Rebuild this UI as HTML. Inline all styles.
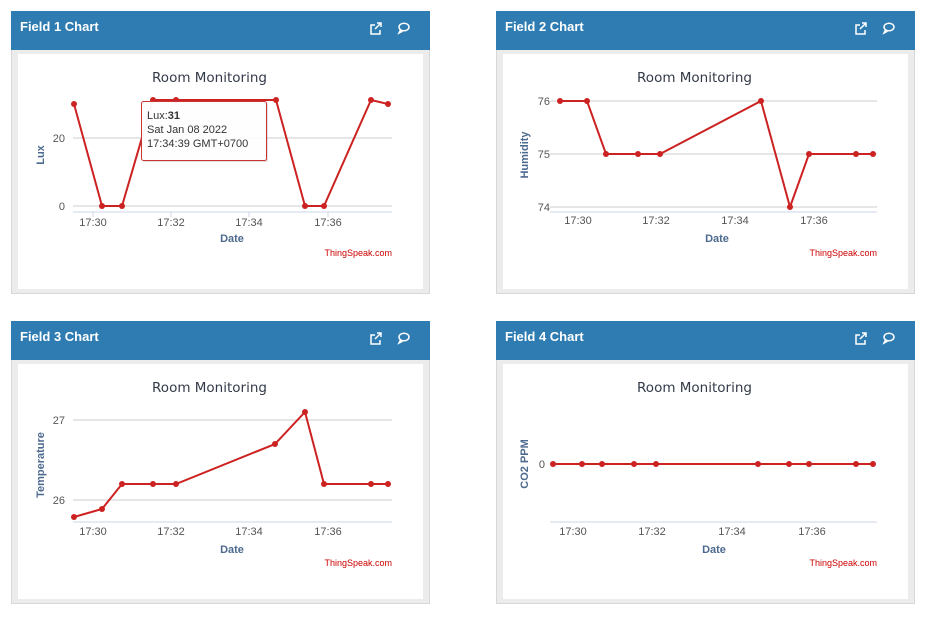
<!DOCTYPE html>
<html><head><style>
body{margin:0;background:#fff;width:927px;height:617px;overflow:hidden;font-family:"Liberation Sans",sans-serif}
svg text{font-family:"Liberation Sans",sans-serif}
svg text.t{font-family:"DejaVu Sans",sans-serif}
</style></head><body>
<svg width="927" height="617" xmlns="http://www.w3.org/2000/svg">
<defs>
<g id="panel">
<rect x="0.5" y="0.5" width="418" height="282" fill="#ececec" stroke="#d8d8d8"/>
<rect x="0" y="0" width="419" height="39" fill="#2e7cb2"/>
<rect x="7" y="43" width="405" height="235" fill="#fff"/>
<g fill="none" stroke="#fff" stroke-width="1.5">
<path d="M364 14h-4v9h9v-4"/><path d="M366 12h4v4M370 12l-6 6"/>
<ellipse cx="393" cy="16" rx="5" ry="3.8"/><path d="M389.5 19l-1.5 3l3.5-1.8"/>
</g>
<text class="t" x="198.5" y="71" font-size="13.5" fill="#333a48" text-anchor="middle">Room Monitoring</text>
<text x="381" y="245" font-size="9" fill="#c00" text-anchor="end">ThingSpeak.com</text>
</g>
</defs>

<!-- Panel 1 -->
<g transform="translate(11,11)"><use href="#panel"/>
<text x="9" y="20" font-size="13" font-weight="bold" fill="#fff">Field 1 Chart</text>
<text x="221" y="231" font-size="11" font-weight="bold" fill="#4d6a8f" text-anchor="middle">Date</text>
</g>
<g transform="translate(11,11)"><text transform="translate(33,144) rotate(-90)" font-size="11" font-weight="bold" fill="#4d6a8f" text-anchor="middle">Lux</text></g>
<g stroke="#ccc"><line x1="73" y1="138" x2="392" y2="138"/><line x1="73" y1="206" x2="392" y2="206"/></g>
<line x1="73" y1="212" x2="392" y2="212" stroke="#ccd6eb"/>
<g stroke="#ccd6eb"><line x1="93" y1="212" x2="93" y2="217"/><line x1="171" y1="212" x2="171" y2="217"/><line x1="249" y1="212" x2="249" y2="217"/><line x1="328" y1="212" x2="328" y2="217"/></g>
<g font-size="11" fill="#555" text-anchor="middle"><text x="65" y="142" text-anchor="end">20</text><text x="65" y="210" text-anchor="end">0</text>
<text x="93" y="226">17:30</text><text x="171" y="226">17:32</text><text x="249" y="226">17:34</text><text x="328" y="226">17:36</text></g>
<polyline points="74,104 102,206 122,206 153,100 176,100 276,100 305,206 324,206 371,100 388,104" fill="none" stroke="#cc2222" stroke-width="2"/>
<g fill="#cc2222"><circle cx="74" cy="104" r="3"/><circle cx="102" cy="206" r="3"/><circle cx="122" cy="206" r="3"/><circle cx="153" cy="100" r="3"/><circle cx="176" cy="100" r="3"/><circle cx="276" cy="100" r="3"/><circle cx="305" cy="206" r="3"/><circle cx="324" cy="206" r="3"/><circle cx="371" cy="100" r="3"/><circle cx="388" cy="104" r="3"/></g>
<rect x="143" y="103" width="125" height="59" rx="2" fill="#000" fill-opacity="0.12"/>
<rect x="141.5" y="101.5" width="125" height="59" rx="2" fill="#fff" fill-opacity="0.95" stroke="#cc3333"/>
<text font-size="11" fill="#333"><tspan x="147" y="119">Lux:<tspan font-weight="bold">31</tspan></tspan><tspan x="147" y="133">Sat Jan 08 2022</tspan><tspan x="147" y="147">17:34:39 GMT+0700</tspan></text>

<!-- Panel 2 -->
<g transform="translate(496,11)"><use href="#panel"/>
<text x="9" y="20" font-size="13" font-weight="bold" fill="#fff">Field 2 Chart</text>
<text x="221" y="231" font-size="11" font-weight="bold" fill="#4d6a8f" text-anchor="middle">Date</text>
<text transform="translate(32,144) rotate(-90)" font-size="11" font-weight="bold" fill="#4d6a8f" text-anchor="middle">Humidity</text>
</g>
<g stroke="#ccc"><line x1="550" y1="101" x2="877" y2="101"/><line x1="550" y1="154" x2="877" y2="154"/><line x1="550" y1="207" x2="877" y2="207"/></g>
<line x1="550" y1="212" x2="877" y2="212" stroke="#ccd6eb"/>
<g font-size="11" fill="#555" text-anchor="middle"><text x="550" y="105" text-anchor="end">76</text><text x="550" y="158" text-anchor="end">75</text><text x="550" y="211" text-anchor="end">74</text>
<text x="578" y="224">17:30</text><text x="656" y="224">17:32</text><text x="735" y="224">17:34</text><text x="814" y="224">17:36</text></g>
<polyline points="560,101 587,101 606,154 638,154 660,154 761,101 790,207 809,154 856,154 873,154" fill="none" stroke="#cc2222" stroke-width="2"/>
<g fill="#cc2222"><circle cx="560" cy="101" r="3"/><circle cx="587" cy="101" r="3"/><circle cx="606" cy="154" r="3"/><circle cx="638" cy="154" r="3"/><circle cx="660" cy="154" r="3"/><circle cx="761" cy="101" r="3"/><circle cx="790" cy="207" r="3"/><circle cx="809" cy="154" r="3"/><circle cx="856" cy="154" r="3"/><circle cx="873" cy="154" r="3"/></g>

<!-- Panel 3 -->
<g transform="translate(11,321)"><use href="#panel"/>
<text x="9" y="20" font-size="13" font-weight="bold" fill="#fff">Field 3 Chart</text>
<text x="221" y="232" font-size="11" font-weight="bold" fill="#4d6a8f" text-anchor="middle">Date</text>
<text transform="translate(33,144) rotate(-90)" font-size="11" font-weight="bold" fill="#4d6a8f" text-anchor="middle">Temperature</text>
</g>
<g stroke="#ccc"><line x1="73" y1="420" x2="392" y2="420"/><line x1="73" y1="500" x2="392" y2="500"/></g>
<line x1="73" y1="522" x2="392" y2="522" stroke="#ccd6eb"/>
<g font-size="11" fill="#555" text-anchor="middle"><text x="65" y="424" text-anchor="end">27</text><text x="65" y="504" text-anchor="end">26</text>
<text x="93" y="535">17:30</text><text x="171" y="535">17:32</text><text x="249" y="535">17:34</text><text x="328" y="535">17:36</text></g>
<polyline points="74,517 102,509 122,484 153,484 176,484 275,444 305,412 324,484 371,484 388,484" fill="none" stroke="#cc2222" stroke-width="2"/>
<g fill="#cc2222"><circle cx="74" cy="517" r="3"/><circle cx="102" cy="509" r="3"/><circle cx="122" cy="484" r="3"/><circle cx="153" cy="484" r="3"/><circle cx="176" cy="484" r="3"/><circle cx="275" cy="444" r="3"/><circle cx="305" cy="412" r="3"/><circle cx="324" cy="484" r="3"/><circle cx="371" cy="484" r="3"/><circle cx="388" cy="484" r="3"/></g>

<!-- Panel 4 -->
<g transform="translate(496,321)"><use href="#panel"/>
<text x="9" y="20" font-size="13" font-weight="bold" fill="#fff">Field 4 Chart</text>
<text x="218" y="232" font-size="11" font-weight="bold" fill="#4d6a8f" text-anchor="middle">Date</text>
<text transform="translate(32,143) rotate(-90)" font-size="11" font-weight="bold" fill="#4d6a8f" text-anchor="middle">CO2 PPM</text>
</g>
<line x1="550" y1="522" x2="877" y2="522" stroke="#ccd6eb"/>
<g font-size="11" fill="#555" text-anchor="middle"><text x="545" y="468" text-anchor="end">0</text>
<text x="573" y="535">17:30</text><text x="652" y="535">17:32</text><text x="732" y="535">17:34</text><text x="812" y="535">17:36</text></g>
<polyline points="553,464 873,464" fill="none" stroke="#cc2222" stroke-width="2"/>
<g fill="#cc2222"><circle cx="553" cy="464" r="3"/><circle cx="582" cy="464" r="3"/><circle cx="602" cy="464" r="3"/><circle cx="634" cy="464" r="3"/><circle cx="656" cy="464" r="3"/><circle cx="758" cy="464" r="3"/><circle cx="789" cy="464" r="3"/><circle cx="809" cy="464" r="3"/><circle cx="856" cy="464" r="3"/><circle cx="873" cy="464" r="3"/></g>
</svg>
</body></html>
